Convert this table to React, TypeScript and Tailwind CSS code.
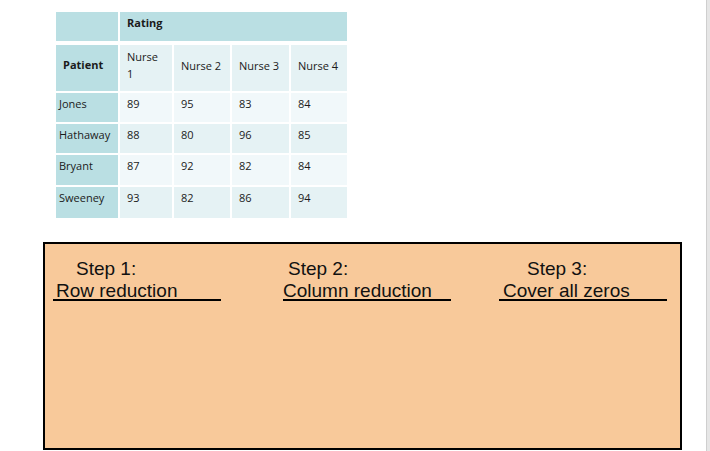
type Row = { name: string; values: number[]; shade: 'light' | 'dark'; h: string }

const rows: Row[] = [
  { name: 'Jones', values: [89, 95, 83, 84], shade: 'light', h: 'h-[29px]' },
  { name: 'Hathaway', values: [88, 80, 96, 85], shade: 'dark', h: 'h-[29px]' },
  { name: 'Bryant', values: [87, 92, 82, 84], shade: 'light', h: 'h-[30px]' },
  { name: 'Sweeney', values: [93, 82, 86, 94], shade: 'dark', h: 'h-[31px]' },
]

const widths = ['w-[52px]', 'w-[56px]', 'w-[57px]', 'w-[56px]']

const steps = [
  { title: 'Step 1:', label: 'Row reduction', titlePad: 'pl-[23px]', labelPad: 'pl-[3px]', gap: 'ml-[8px]' },
  { title: 'Step 2:', label: 'Column reduction', titlePad: 'pl-[5px]', labelPad: 'pl-0', gap: 'ml-[62px]' },
  { title: 'Step 3:', label: 'Cover all zeros', titlePad: 'pl-[28px]', labelPad: 'pl-[4px]', gap: 'ml-[48px]' },
]

export default function App() {
  return (
    <div className="flex h-[451px] w-[710px] overflow-hidden bg-white">
      <div className="w-[706px] pt-[12px]">
        {/* Ratings table */}
        <div className="ml-[56px] flex flex-col gap-[2px] font-['Open_Sans',sans-serif] text-[11px] leading-[16px] text-[#1b1b1b]">
          <div className="flex h-[29px] gap-[2px]">
            <div className="w-[62px] bg-[#badfe3]" />
            <div className="w-[227px] bg-[#badfe3] pl-[7px] pt-[3px] font-bold">Rating</div>
          </div>
          <div className="mt-[2px] flex h-[46px] gap-[2px]">
            <div className="flex w-[62px] items-center bg-[#badfe3] pb-[6px] pl-[7px] font-bold">Patient</div>
            {['Nurse 1', 'Nurse 2', 'Nurse 3', 'Nurse 4'].map((n, i) => (
              <div
                key={n}
                className={`flex ${widths[i]} items-center bg-[#e5f2f4] pb-[6px] pl-[7px] pr-[6px] leading-[17px]`}
              >
                {n}
              </div>
            ))}
          </div>
          {rows.map((r) => (
            <div key={r.name} className={`flex ${r.h} gap-[2px]`}>
              <div className="w-[62px] bg-[#badfe3] pl-[3px] pt-[3px]">{r.name}</div>
              {r.values.map((v, i) => (
                <div
                  key={i}
                  className={`${widths[i]} pl-[7px] pt-[3px] ${r.shade === 'light' ? 'bg-[#f1f8fa]' : 'bg-[#e5f2f4]'}`}
                >
                  {v}
                </div>
              ))}
            </div>
          ))}
        </div>

        {/* Hungarian steps box */}
        <div className="ml-[43px] mt-[24px] h-[208px] w-[639px] border-2 border-black bg-[#f8c99a] font-['Liberation_Sans',Arial,sans-serif] text-[19px] leading-[22px] text-[#111]">
          <div className="mt-[14px] flex">
            {steps.map((s) => (
              <div key={s.title} className={`${s.gap} w-[168px]`}>
                <div className={`${s.titlePad} whitespace-nowrap`}>{s.title}</div>
                <div className={`${s.labelPad} h-[21px] whitespace-nowrap border-b-2 border-black`}>{s.label}</div>
              </div>
            ))}
          </div>
        </div>
      </div>
      <div className="w-[1px] bg-[#cfcfcf]" />
      <div className="w-[3px] bg-[#e6e6e6]" />
    </div>
  )
}
